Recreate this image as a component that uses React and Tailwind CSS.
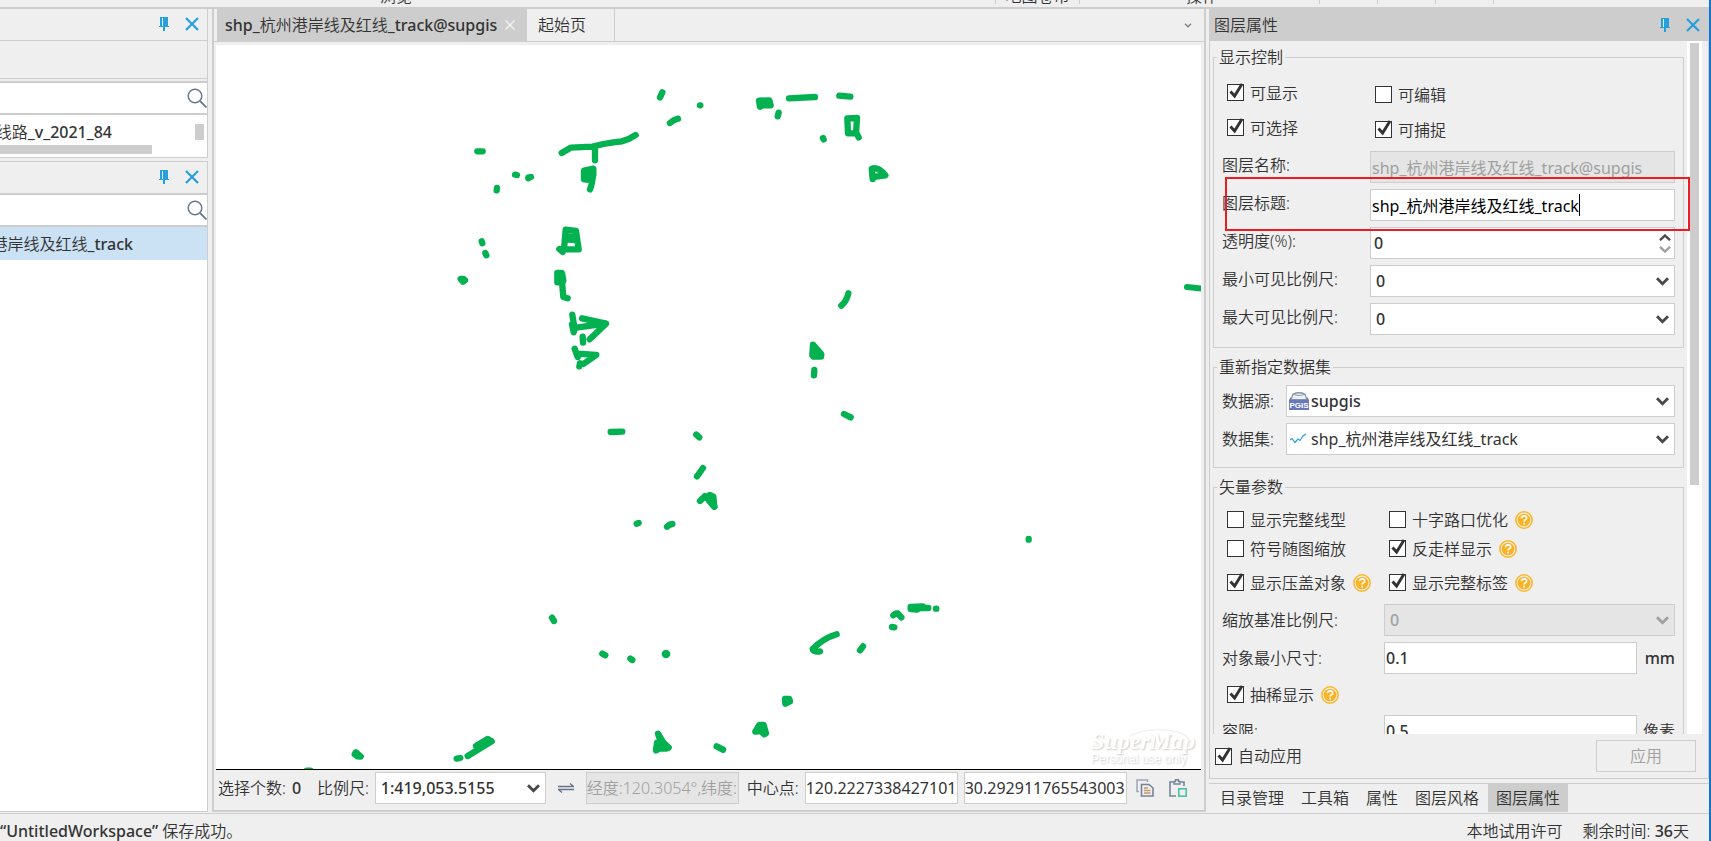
import React from "react";

const cx = (...parts) => parts.filter(Boolean).join(" ");

function PinIcon() {
  return (
    <svg width="10" height="14" viewBox="0 0 10 14" aria-hidden="true">
      <path d="M1 0H9V9H10V10H0V9H1Z" fill="#26a0da" />
      <rect x="3" y="1" width="1" height="8" fill="#e4f1f9" />
      <rect x="4" y="10" width="2" height="4" fill="#26a0da" />
    </svg>
  );
}

function CloseIcon() {
  return (
    <svg width="14" height="14" viewBox="0 0 14 14" aria-hidden="true">
      <path d="M1 1L13 13M13 1L1 13" stroke="#26a0da" strokeWidth="2.2" />
    </svg>
  );
}

function SearchIcon() {
  return (
    <svg width="20" height="20" viewBox="0 0 20 20" fill="none" aria-hidden="true">
      <circle cx="8" cy="8" r="6.8" stroke="#6b7a90" strokeWidth="1.5" />
      <path d="M13 13L19.5 19.5" stroke="#6b7a90" strokeWidth="1.8" />
    </svg>
  );
}

function HelpIcon() {
  return (
    <svg width="18" height="18" viewBox="0 0 18 18" fill="none" aria-hidden="true">
      <circle cx="9" cy="9" r="8.200" stroke="#fdb827" strokeWidth="1.6" />
      <circle cx="9" cy="9" r="6.300" fill="#fdb022" />
      <path d="M6.5 7.2Q6.6 4.800 9.1 4.800Q11.700 4.800 11.600 7Q11.500 8.400 10 9.100Q9.100 9.600 9.100 10.600" stroke="#fff" strokeWidth="1.700" />
      <rect x="8.2" y="11.700" width="1.800" height="1.800" fill="#fff" />
    </svg>
  );
}

function Chevron({ muted }) {
  return (
    <svg width="13" height="9" viewBox="0 0 13 9" fill="none" aria-hidden="true">
      <path d="M1 1.2L6.5 6.700L12 1.2" stroke={muted ? "#a0a0a0" : "#484848"} strokeWidth="2.800" />
    </svg>
  );
}

function SpinArrow({ muted }) {
  return (
    <svg width="12" height="7" viewBox="0 0 12 7" fill="none" aria-hidden="true">
      <path d="M1 0.8L6 5.500L11 0.800" stroke={muted ? "#a0a0a0" : "#484848"} strokeWidth="2.400" />
    </svg>
  );
}

function PanelButtons() {
  return (
    <div className="flex items-center gap-4 pb-px">
      <button type="button" aria-label="固定"><PinIcon /></button>
      <button type="button" aria-label="关闭"><CloseIcon /></button>
    </div>
  );
}

function Check({ id, label, checked, help, className }) {
  return (
    <div className={cx("flex items-center", className)}>
      <span className="grid size-[17px] shrink-0">
        <input
          id={id}
          type="checkbox"
          defaultChecked={checked}
          className="peer col-start-1 row-start-1 size-[17px] appearance-none border border-[#333] bg-white"
        />
        <svg
          viewBox="0 0 17 17"
          className="pointer-events-none invisible col-start-1 row-start-1 size-[17px] overflow-visible peer-checked:visible"
          fill="none"
          aria-hidden="true"
        >
          <path d="M3.5 7.5L7.6 12L15 0" stroke="#333" strokeWidth="2.9" />
        </svg>
      </span>
      <label htmlFor={id} className="pl-1.5">{label}</label>
      {help && <button type="button" aria-label="帮助" className="ml-[7px]"><HelpIcon /></button>}
    </div>
  );
}

function Combo({ id, value, icon, disabled, className }) {
  return (
    <div
      className={cx(
        "grid h-8 min-w-0 items-center border border-[#cdcdcd]",
        disabled ? "bg-[#e5e5e5] text-[#a0a0a0]" : "bg-white",
        className
      )}
    >
      <select
        id={id}
        disabled={disabled}
        className={cx("col-start-1 row-start-1 h-full w-full appearance-none outline-none", icon ? "pl-6" : "pl-[5px]")}
      >
        <option>{value}</option>
      </select>
      {icon && <span className="pointer-events-none col-start-1 row-start-1 justify-self-start pl-0.5">{icon}</span>}
      <span className="pointer-events-none col-start-1 row-start-1 justify-self-end pr-[5px]">
        <Chevron muted={disabled} />
      </span>
    </div>
  );
}

const field = "h-8 min-w-0 border border-[#cdcdcd] bg-white outline-none disabled:bg-[#e5e5e5] disabled:text-[#a0a0a0]";

function Group({ title, children }) {
  return (
    <fieldset className="min-w-0 border border-[#cdcdcd] px-2 pb-3">
      <legend className="-ml-[5px] h-5 px-0.5 leading-5">{title}</legend>
      {children}
    </fieldset>
  );
}

function DatasourceIcon() {
  return (
    <svg width="20" height="18" viewBox="0 0 20 18" aria-hidden="true">
      <path d="M4 2Q10 -0.500 16 2L18 8H2Z" fill="#eef1f4" stroke="#8796a5" strokeWidth="1.300" />
      <path d="M4.500 2.500Q10 4.500 15.500 2.500" fill="none" stroke="#8796a5" strokeWidth="1" />
      <path d="M0 8L2 5V7.500H18V5L20 8V18H0Z" fill="#6878bb" />
      <text x="10" y="15.800" textAnchor="middle" fontSize="8" fontWeight="700" fill="#fff" fontFamily="Liberation Sans, sans-serif">PGIS</text>
    </svg>
  );
}

function LineIcon() {
  return (
    <svg width="18" height="12" viewBox="0 0 18 12" fill="none" aria-hidden="true">
      <path d="M1 7L3 5.5L6 9.5L9 6L11 7.5L14 3L17 1" stroke="#26a0da" strokeWidth="1.2" />
    </svg>
  );
}

function Shoreline() {
  return (
    <svg
      className="absolute inset-0 h-full w-full"
      viewBox="216 45 985 724"
      preserveAspectRatio="xMinYMin slice"
      fill="none"
      stroke="#04b151"
      strokeWidth="19"
      strokeLinecap="round"
      strokeLinejoin="round"
      role="img"
      aria-label="地图"
    >
      <g transform="translate(440 80) scale(0.33333)">
        <path d="M660 52L667 37M690 129Q702 118 714 116M365 219L392 203L458 200L490 192L520 187L546 184L566 177L587 165M465 200V241" />
        <path d="M112 214H128M225 284L231 285M265 293L273 291M265 293V295M171 324L170 331M125 484L127 490M136 519L139 526" />
        <path d="M432 272L460 266V285L455 300L432 298Z" fill="#04b151" />
        <path d="M458 290Q456 315 450 328" />
        <path d="M62 597H71L75 601L69 605Z" fill="#04b151" />
        <path d="M377 449L408 453L416 508H372ZM376 478L412 481M384 470L410 473M358 507L368 516" />
        <path d="M352 579H366L370 602L366 607H352Z" fill="#04b151" />
        <path d="M366 605L370 651L383 655M397 704L404 748L401 757L396 733" />
        <path d="M426 715L498 731L408 743M498 731L449 778M428 770L429 788M404 806L413 831M413 821L469 825L430 852L420 850L418 859" />
      </g>
      <g transform="translate(700 80) scale(0.33333)">
        <path d="M0 76H1M236 98L233 109M267 55L345 51M418 47L451 50M369 174L371 178" />
        <path d="M177 62L208 61L212 76L187 76L180 80Z" fill="#04b151" />
        <path d="M442 115L471 114L468 160H444ZM470 160L476 172" />
        <path d="M515 266Q535 260 556 286L518 291V297Z" />
        <path d="M445 640Q440 663 424 677M343 870L342 886M432 1002L452 1012" />
        <path d="M339 794L364 822L363 830H341L337 826Z" fill="#04b151" />
      </g>
      <g transform="translate(280 400) scale(0.33333)">
        <path d="M992 96L1027 95M1249 104L1258 112M1269 204L1251 229M1260 303L1275 288L1303 320M1070 371L1076 369M1161 380Q1168 373 1177 372" />
        <path d="M1289 285L1300 290L1303 320L1284 296" />
        <path d="M816 653L822 663M967 761L976 766M1051 776L1057 780M80 1112H92M530 1076L541 1074M1310 1039L1329 1049" />
        <path d="M1158 759V765M1155 762H1161" strokeWidth="20" />
        <path d="M228 1057L242 1070L232 1069L224 1063Z" fill="#04b151" />
        <path d="M563 1068L635 1024L623 1017L588 1038L610 1032" fill="#04b151" />
        <path d="M1134 1001L1150 1028L1166 1043L1157 1046L1140 1045L1128 1051L1131 1028L1140 1020Z" fill="#04b151" />
      </g>
      <g transform="translate(700 500) scale(0.33333)">
        <path d="M986 117V119M634 324H685M708 326H709M580 346L588 340H593L604 352M576 381L583 382" />
        <path d="M632 321L668 319L650 329L632 327Z" fill="#04b151" />
        <path d="M410 403Q370 415 338 447Q340 457 360 454M489 439L480 451" />
        <path d="M255 597H268L270 604L256 611Z" fill="#04b151" />
        <path d="M178 675H191L198 700L193 703L182 693L166 695Z" fill="#04b151" />
      </g>
      <path d="M1187 287L1205 289" strokeWidth="6" />
    </svg>
  );
}

function TopStrip() {
  return (
    <div className="flex h-[7px] shrink-0 items-end overflow-hidden pb-[3px] leading-4">
      <span className="w-[995px] shrink-0 pl-[380px]">浏览</span>
      <span className="w-[85px] shrink-0 border-x border-[#cdcdcd] text-center">地图卷帘</span>
      <span className="w-[240px] shrink-0 border-r border-[#cdcdcd] pl-[106px]">操作</span>
      <span className="h-4 w-[58px] shrink-0 border-r border-[#cdcdcd]" />
      <span className="h-4 w-[58px] shrink-0 border-r border-[#cdcdcd]" />
      <span className="h-4 w-[58px] shrink-0 border-r border-[#cdcdcd]" />
    </div>
  );
}

function LeftDock() {
  return (
    <aside className="flex w-52 shrink-0 flex-col">
      <section className="border-r border-b border-[#cdcdcd]">
        <div className="flex h-8 items-center justify-end border-b border-[#cdcdcd] pr-2"><PanelButtons /></div>
        <div className="h-[38px] border-b border-[#cdcdcd]" />
        <div className="mt-0.5 flex h-[34px] items-center border-y-2 border-[#cdcdcd] bg-white">
          <input aria-label="搜索工作空间" className="h-full min-w-0 flex-1 outline-none" />
          <SearchIcon />
        </div>
        <div className="flex h-[42px] justify-between bg-white pr-[3px]">
          <div className="flex w-[152px] flex-col">
            <div className="flex h-[30px] w-28 items-center justify-end overflow-hidden pt-1 whitespace-nowrap">
              线路<span className="font-medium">_v_2021_84</span>
            </div>
            <div className="h-[9px] bg-[#cdcdcd]" />
          </div>
          <div className="mt-[9px] h-4 w-[9px] bg-[#cdcdcd]" />
        </div>
      </section>
      <section className="mt-[3px] flex min-h-0 flex-1 flex-col border border-l-0 border-[#cdcdcd]">
        <div className="flex h-[31px] items-center justify-end pr-2"><PanelButtons /></div>
        <div className="flex h-[34px] items-center border-y-2 border-[#cdcdcd] bg-white">
          <input aria-label="搜索图层" className="h-full min-w-0 flex-1 outline-none" />
          <SearchIcon />
        </div>
        <div className="flex-1 bg-white">
          <div className="h-[33px] bg-[#cbe1f4]">
            <div className="flex h-full w-[133px] items-center justify-end overflow-hidden whitespace-nowrap">
              港岸线及红线<span className="font-medium">_track</span>
            </div>
          </div>
        </div>
      </section>
    </aside>
  );
}

function MapDock() {
  return (
    <main className="ml-1 flex min-w-0 flex-1 flex-col border-x-2 border-b-2 border-[#cdcdcd]">
      <div className="flex h-[33px] shrink-0 items-stretch border-b border-[#cdcdcd] pl-[3px]">
        <div className="flex w-[310px] items-center bg-[#cdcdcd] pl-2">
          <button type="button" className="whitespace-nowrap">
            <span className="font-medium">shp_</span>杭州港岸线及红线<span className="font-medium">_track@supgis</span>
          </button>
          <button type="button" aria-label="关闭标签" className="ml-2">
            <svg width="10" height="10" viewBox="0 0 10 10" aria-hidden="true">
              <path d="M0.5 0.5L9.5 9.5M9.5 0.5L0.5 9.5" stroke="#f2f2f2" strokeWidth="1.3" />
            </svg>
          </button>
        </div>
        <button type="button" className="w-[88px] border-r border-[#cdcdcd] pl-[11px] text-left">起始页</button>
        <button type="button" aria-label="更多标签" className="mr-3 ml-auto">
          <svg width="8" height="5" viewBox="0 0 8 5" fill="none" aria-hidden="true">
            <path d="M1 0.8L4 3.8L7 0.8" stroke="#808080" strokeWidth="1.3" />
          </svg>
        </button>
      </div>
      <div className="relative mt-[3px] mr-[3px] ml-0.5 min-h-0 flex-1 overflow-hidden border-b border-black bg-white">
        <Shoreline />
        <div className="absolute right-1.5 bottom-1 w-[104px] text-white [text-shadow:1px_1px_2px_#c8c8c8]">
          <svg className="absolute top-0 left-9 overflow-visible" width="70" height="24" viewBox="0 0 70 24" fill="none" aria-hidden="true">
            <path d="M2 7Q30 -5 56 5Q68 12 58 22" stroke="#f1f1f1" strokeWidth="1.5" />
          </svg>
          <div className="font-['Liberation_Serif',serif] text-2xl leading-6 font-bold italic">SuperMap</div>
          <div className="font-['Liberation_Sans',sans-serif] text-xs leading-3 font-normal whitespace-nowrap">Personal use only</div>
        </div>
      </div>
      <div className="flex h-10 shrink-0 items-start overflow-hidden pt-0.5 pl-1 leading-8 whitespace-nowrap">
        <span>选择个数:</span>
        <span className="ml-1.5 w-[25px] font-medium">0</span>
        <label htmlFor="scale">比例尺:</label>
        <Combo id="scale" value="1:419,053.5155" className="ml-1.5 w-[171px] leading-5 font-medium" />
        <button type="button" aria-label="切换" className="ml-3 h-8">
          <svg width="16" height="10" viewBox="0 0 16 10" fill="none" aria-hidden="true">
            <path d="M0 3.5H15.5L12 0.5M16 6.5H0.5L4 9.5" stroke="#64748b" strokeWidth="1.3" />
          </svg>
        </button>
        <input aria-label="经纬度" disabled defaultValue="经度:120.3054°,纬度:" className={cx(field, "ml-3 w-[153px]")} />
        <label htmlFor="center-x" className="ml-2">中心点:</label>
        <input id="center-x" defaultValue="120.2227338427101" className={cx(field, "ml-1.5 w-[153px] font-normal")} />
        <input aria-label="中心点纬度" defaultValue="30.292911765543003" className={cx(field, "ml-1.5 w-[163px] font-normal")} />
        <button type="button" aria-label="复制" className="ml-[9px] h-8">
          <svg width="18" height="18" viewBox="0 0 18 18" fill="none" aria-hidden="true">
            <path d="M3 12.5H1V1H11.5V3" stroke="#9aa8b8" strokeWidth="1.5" />
            <path d="M5.5 5.5H13L17 9V17H5.5Z" stroke="#74859a" strokeWidth="1.6" />
            <path d="M8 9H12M8 11.5H14.5M8 14H14.5" stroke="#c39a6b" strokeWidth="1.3" />
          </svg>
        </button>
        <button type="button" aria-label="粘贴" className="ml-[15px] h-8">
          <svg width="18" height="18" viewBox="0 0 18 18" fill="none" aria-hidden="true">
            <path d="M7 17H1V3H4.500M11.500 3H15V7" stroke="#74859a" strokeWidth="1.6" />
            <path d="M5 5V2.500H6.500V0.800H9.500V2.500H11V5Z" stroke="#74859a" strokeWidth="1.4" />
            <rect x="9.800" y="9.800" width="7.400" height="7.400" stroke="#4dbfa8" strokeWidth="1.6" />
          </svg>
        </button>
      </div>
    </main>
  );
}

function DisplayGroup() {
  return (
    <Group title="显示控制">
      <div className="flex">
        <div className="w-[148px] shrink-0 pt-2">
          <Check id="visible" label="可显示" checked className="h-[35px] pl-[5px]" />
          <Check id="selectable" label="可选择" checked className="h-[35px] pl-[5px]" />
          <div className="mt-1 flex flex-col gap-1.5 leading-8">
            <label htmlFor="layer-name">图层名称:</label>
            <label htmlFor="layer-title">图层标题:</label>
            <label htmlFor="opacity">透明度(%):</label>
            <label htmlFor="min-scale">最小可见比例尺:</label>
            <label htmlFor="max-scale">最大可见比例尺:</label>
          </div>
        </div>
        <div className="min-w-0 flex-1 pt-2.5">
          <Check id="editable" label="可编辑" className="h-[35px] pl-[5px]" />
          <Check id="snappable" label="可捕捉" checked className="h-[35px] pl-[5px]" />
          <div className="mt-1 flex flex-col gap-1.5">
            <input id="layer-name" disabled defaultValue="shp_杭州港岸线及红线_track@supgis" className={cx(field, "px-px font-normal")} />
            <div className="relative flex">
              <input id="layer-title" defaultValue="shp_杭州港岸线及红线_track" className={cx(field, "flex-1 px-px font-normal text-black")} />
              <span className="absolute top-[5px] left-[209px] h-[22px] w-px bg-black" />
              <span className="pointer-events-none absolute -top-3 -right-[15px] -bottom-2.5 -left-[145px] border-2 border-[#ed1c24]" />
            </div>
            <div className="flex h-8 items-center border border-[#cdcdcd] bg-white px-[3px]">
              <input id="opacity" defaultValue="0" className="min-w-0 flex-1 font-medium outline-none" />
              <div className="flex flex-col gap-[5px]">
                <button type="button" aria-label="增加" className="rotate-180"><SpinArrow /></button>
                <button type="button" aria-label="减少"><SpinArrow muted /></button>
              </div>
            </div>
            <Combo id="min-scale" value="0" className="font-medium" />
            <Combo id="max-scale" value="0" className="font-medium" />
          </div>
        </div>
      </div>
    </Group>
  );
}

function DatasetGroup() {
  return (
    <Group title="重新指定数据集">
      <div className="grid grid-cols-[64px_1fr] gap-y-1.5 pt-2 leading-8">
        <label htmlFor="datasource">数据源:</label>
        <Combo id="datasource" value="supgis" icon={<DatasourceIcon />} className="leading-5 font-medium" />
        <label htmlFor="dataset">数据集:</label>
        <Combo id="dataset" value="shp_杭州港岸线及红线_track" icon={<LineIcon />} className="leading-5 font-normal" />
      </div>
    </Group>
  );
}

function VectorGroup() {
  return (
    <Group title="矢量参数">
      <div className="grid grid-cols-[162px_1fr] pt-2">
        <Check id="full-line" label="显示完整线型" className="h-[29px] pl-[5px]" />
        <Check id="crossroad" label="十字路口优化" help className="h-[29px] pl-[5px]" />
        <Check id="symbol-scale" label="符号随图缩放" className="h-[29px] pl-[5px]" />
        <Check id="antialias" label="反走样显示" checked help className="h-[29px] pl-[5px]" />
        <Check id="overlap" label="显示压盖对象" checked help className="h-[39px] pl-[5px]" />
        <Check id="full-label" label="显示完整标签" checked help className="h-[39px] pl-[5px]" />
      </div>
      <div className="mt-0.5 grid grid-cols-[162px_1fr_38px] leading-8">
        <label htmlFor="base-scale">缩放基准比例尺:</label>
        <Combo id="base-scale" value="0" disabled className="col-span-2 mb-1.5 leading-5 font-medium" />
        <label htmlFor="min-size">对象最小尺寸:</label>
        <input id="min-size" defaultValue="0.1" className={cx(field, "px-px font-medium")} />
        <span className="text-right font-medium">mm</span>
        <Check id="thinning" label="抽稀显示" checked help className="col-span-3 h-[41px] pl-[5px]" />
        <label htmlFor="tolerance">容限:</label>
        <input id="tolerance" defaultValue="0.5" className={cx(field, "px-px font-medium")} />
        <span className="text-right">像素</span>
      </div>
    </Group>
  );
}

const tabs = ["目录管理", "工具箱", "属性", "图层风格", "图层属性"];

function PropertyDock() {
  return (
    <aside className="ml-[3px] flex w-[500px] shrink-0 flex-col">
      <section className="flex min-h-0 flex-1 flex-col border border-t-0 border-[#cdcdcd]">
        <header className="flex h-8 shrink-0 items-center justify-between bg-[#cdcdcd] pr-2 pl-1">
          <h2>图层属性</h2>
          <PanelButtons />
        </header>
        <div className="flex min-h-0 flex-1">
          <div className="flex min-w-0 flex-1 flex-col gap-[9px] overflow-x-visible overflow-y-clip px-[3px] pt-1.5">
            <DisplayGroup />
            <DatasetGroup />
            <VectorGroup />
          </div>
          <div className="mr-1.5 w-[15px] bg-white px-[3px] pt-0.5">
            <div className="h-[442px] bg-[#cdcdcd]" />
          </div>
        </div>
        <div className="flex h-11 shrink-0 items-center justify-between pr-3 pl-[5px]">
          <Check id="auto-apply" label="自动应用" checked />
          <button type="button" disabled className="h-8 w-[100px] border border-[#cdcdcd] text-[#a0a0a0]">应用</button>
        </div>
      </section>
      <nav className="mt-1 flex h-[29px] shrink-0 items-start gap-px border-t border-[#cdcdcd] pl-[3px]">
        {tabs.map((tab, i) => (
          <button
            key={tab}
            type="button"
            className={cx(
              "h-7 px-2 leading-6",
              i === tabs.length - 1 && "border-b border-[#cdcdcd] bg-[#cdcdcd]"
            )}
          >
            {tab}
          </button>
        ))}
      </nav>
    </aside>
  );
}

export default function App() {
  return (
    <div className="flex h-screen min-h-[600px] overflow-hidden bg-[#efefef] font-['Noto_Sans','Noto_Sans_CJK_SC',sans-serif] text-base leading-5 font-[350] text-[#333]">
      <div className="flex min-w-0 flex-1 flex-col">
        <TopStrip />
        <div className="flex min-h-0 flex-1 border-t-2 border-[#cdcdcd]">
          <LeftDock />
          <MapDock />
          <PropertyDock />
        </div>
        <footer className="mt-px flex h-7 shrink-0 items-center justify-between border-t border-[#cdcdcd] pt-1.5 pr-5">
          <span className="whitespace-nowrap">
            <span className="font-medium">“UntitledWorkspace”</span> 保存成功。
          </span>
          <div className="flex gap-5">
            <span>本地试用许可</span>
            <span>剩余时间: <span className="font-medium">36</span>天</span>
          </div>
        </footer>
      </div>
      <div className="w-0.5 shrink-0 bg-[#0f75d0]" />
    </div>
  );
}
